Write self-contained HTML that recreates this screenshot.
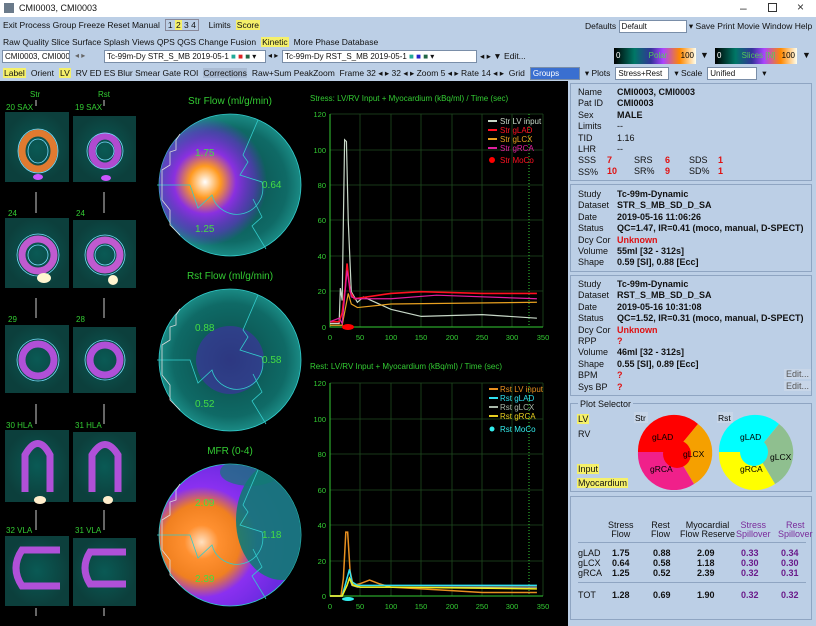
<!DOCTYPE html>
<html><head><meta charset="utf-8"><style>
*{margin:0;padding:0;box-sizing:border-box}
body{width:816px;height:626px;overflow:hidden;background:#bccfe6;font-family:"Liberation Sans",sans-serif;font-size:9px;color:#111;position:relative}
.a{position:absolute;white-space:nowrap}
.tb{position:absolute;left:0;top:0;width:816px;height:17px;background:#fff}
.row{position:absolute;left:0;height:14px;display:flex;align-items:center;gap:5px;padding-left:3px;font-size:8.5px;white-space:nowrap}
.hl{background:#f5f06a;padding:0 1px}
.sel{background:#fff;border:1px solid #7a8ea8;height:13px;padding:0 2px;font-size:8px;line-height:11px;overflow:hidden}
.box{position:absolute;left:570px;width:242px;border:1px solid #8fa5c2;background:#bccfe6}
.b{font-weight:bold}
.r{color:#e01010;font-weight:bold}
.p{color:#7a2a9a}
.pb{color:#6a1a8a;font-weight:bold}
</style></head><body>
<div class="tb"></div>
<div class="a" style="left:4px;top:3px;width:10px;height:10px;background:#6a7a8a"></div>
<div class="a" style="left:19px;top:3px;font-size:9px">CMI0003, CMI0003</div>
<div class="a" style="left:740px;top:1px;font-size:12px;color:#333">–</div>
<div class="a" style="left:768px;top:3px;width:9px;height:9px;border:1px solid #333"></div>
<div class="a" style="left:797px;top:0px;font-size:12px;color:#333">×</div>

<div class="row" style="top:18px">Exit Process Group Freeze Reset Manual <span style="border:1px solid #889;padding:0 2px">1 <span class="hl">2</span> 3 4</span>&nbsp; Limits <span class="hl">Score</span></div>
<div class="a" style="left:585px;top:20px;font-size:8.5px">Defaults <span class="sel" style="display:inline-block;width:68px;vertical-align:middle">Default</span> ▾ Save Print Movie Window Help</div>
<div class="row" style="top:35px">Raw Quality Slice Surface Splash Views QPS QGS Change Fusion <span class="hl">Kinetic</span> More Phase Database</div>

<div class="a sel" style="left:2px;top:50px;width:68px">CMI0003, CMI0003 ▾</div>
<div class="a" style="left:75px;top:51px;font-size:8px;color:#666">◂ ▸</div>
<div class="a sel" style="left:104px;top:50px;width:162px">Tc-99m-Dy STR_S_MB 2019-05-1 <span style="color:#2a9">■</span> <span style="color:#d22">■</span> <span style="color:#264">■</span> ▾</div>
<div class="a" style="left:268px;top:51px;font-size:8px">◂ ▸</div>
<div class="a sel" style="left:282px;top:50px;width:195px">Tc-99m-Dy RST_S_MB 2019-05-1 <span style="color:#2a9">■</span> <span style="color:#22c">■</span> <span style="color:#264">■</span> ▾</div>
<div class="a" style="left:480px;top:51px;font-size:8.5px">◂ ▸ ▼ Edit...</div>

<div class="a" style="left:614px;top:48px;width:82px;height:16px;background:linear-gradient(90deg,#000,#076 25%,#339 45%,#a4f 60%,#f80 80%,#ffe 100%);color:#fff;font-size:8px;padding:3px 2px">0 <span style="margin-left:26px;color:#5c5">Polar</span> <span style="float:right;color:#000">100</span></div>
<div class="a" style="left:700px;top:50px;font-size:9px">▼</div>
<div class="a" style="left:715px;top:48px;width:82px;height:16px;background:linear-gradient(90deg,#000,#076 25%,#339 45%,#a4f 60%,#f80 80%,#ffe 100%);color:#fff;font-size:8px;padding:3px 2px">0 <span style="margin-left:18px;color:#5c5">Slices [N]</span> <span style="float:right;color:#000">100</span></div>
<div class="a" style="left:802px;top:50px;font-size:9px">▼</div>
<div class="row" style="top:66px"><span class="hl">Label</span> Orient <span class="hl">LV</span> RV ED ES Blur Smear Gate ROI <span style="background:#aabbd2">Corrections</span> Raw+Sum PeakZoom &nbsp;Frame 32 ◂ ▸ 32 ◂ ▸ Zoom 5 ◂ ▸ Rate 14 ◂ ▸ &nbsp;Grid <span class="sel" style="background:#3a6fd0;color:#fff;width:50px">Groups</span>▾ Plots <span class="sel" style="width:54px">Stress+Rest</span>▾ Scale <span class="sel" style="width:50px">Unified</span>▾</div>

<svg class="a" style="left:0;top:81px" width="568" height="545" viewBox="0 81 568 545">
<defs>
<radialGradient id="sl"><stop offset="0" stop-color="#0a5a55"/><stop offset="1" stop-color="#0c3f3c"/></radialGradient>
<radialGradient id="hot" cx="0.5" cy="0.5" r="0.5"><stop offset="0" stop-color="#fff"/><stop offset=".25" stop-color="#ff9a20"/><stop offset=".5" stop-color="#8a30e0"/><stop offset=".8" stop-color="#6a30d0" stop-opacity=".6"/><stop offset="1" stop-color="#6a30d0" stop-opacity="0"/></radialGradient>
<radialGradient id="pbg"><stop offset="0" stop-color="#0a4a48"/><stop offset=".8" stop-color="#0f6a66"/><stop offset="1" stop-color="#1a8a84"/></radialGradient>
<radialGradient id="mfr" cx="0.3" cy="0.55" r="0.6"><stop offset="0" stop-color="#ffe0c0"/><stop offset=".2" stop-color="#ff9030"/><stop offset=".45" stop-color="#f08020"/><stop offset=".65" stop-color="#8a30f0"/><stop offset="1" stop-color="#6a2ae0"/></radialGradient>
</defs>
<rect x="0" y="81" width="568" height="545" fill="#000"/>
<g font-size="8" fill="#3c3" font-family="Liberation Sans">
<text x="30" y="97">Str</text><text x="98" y="97">Rst</text>
<text x="6" y="110">20 SAX</text><text x="75" y="110">19 SAX</text>
<text x="8" y="216">24</text><text x="76" y="216">24</text>
<text x="8" y="322">29</text><text x="76" y="322">28</text>
<text x="6" y="428">30 HLA</text><text x="75" y="428">31 HLA</text>
<text x="6" y="533">32 VLA</text><text x="75" y="533">31 VLA</text>
</g>
<g>
<rect x="5" y="112" width="64" height="70" fill="url(#sl)"/><rect x="73" y="116" width="63" height="66" fill="url(#sl)"/>
<rect x="5" y="218" width="64" height="70" fill="url(#sl)"/><rect x="73" y="220" width="63" height="68" fill="url(#sl)"/>
<rect x="5" y="325" width="64" height="68" fill="url(#sl)"/><rect x="73" y="327" width="63" height="66" fill="url(#sl)"/>
<rect x="5" y="430" width="64" height="72" fill="url(#sl)"/><rect x="73" y="432" width="63" height="70" fill="url(#sl)"/>
<rect x="5" y="536" width="64" height="70" fill="url(#sl)"/><rect x="73" y="538" width="63" height="68" fill="url(#sl)"/>
<g fill="none" stroke-width="7">
<ellipse cx="38" cy="151" rx="16" ry="18" stroke="#e07a30"/><ellipse cx="105" cy="151" rx="13" ry="15" stroke="#b04ad0"/>
<circle cx="38" cy="255" r="16" stroke="#c05ad0"/><circle cx="105" cy="255" r="15" stroke="#c05ad0"/>
<circle cx="38" cy="360" r="16" stroke="#b050d8"/><circle cx="105" cy="360" r="15" stroke="#b050d8"/>
<path d="M25 492 L25 455 Q38 432 50 455 L50 492" stroke="#b050d8"/><path d="M92 492 L92 455 Q105 434 118 455 L118 492" stroke="#b050d8"/>
<path d="M60 550 L22 550 Q10 568 22 586 L60 586" stroke="#b050d8"/><path d="M126 552 L90 552 Q80 568 90 584 L126 584" stroke="#b050d8"/>
</g>
<g fill="none" stroke="#7df" stroke-width=".8">
<ellipse cx="38" cy="151" rx="20" ry="22"/><ellipse cx="38" cy="151" rx="10" ry="12"/>
<circle cx="105" cy="151" r="18"/><circle cx="105" cy="151" r="9"/>
<circle cx="38" cy="255" r="21"/><circle cx="38" cy="255" r="10"/><circle cx="105" cy="255" r="20"/><circle cx="105" cy="255" r="10"/>
<circle cx="38" cy="360" r="21"/><circle cx="105" cy="360" r="20"/>
</g>
<ellipse cx="44" cy="278" rx="7" ry="5" fill="#fff5d0"/><ellipse cx="113" cy="280" rx="5" ry="5" fill="#fff5d0"/>
<ellipse cx="38" cy="177" rx="5" ry="3" fill="#c5f"/><ellipse cx="106" cy="178" rx="5" ry="3" fill="#c5f"/>
<ellipse cx="40" cy="500" rx="6" ry="4" fill="#fec"/><ellipse cx="108" cy="500" rx="5" ry="4" fill="#fec"/>
</g>
<g stroke="#ccc" stroke-width="1"><path d="M36 100V106M104 100V106M36 192V213M104 192V213M36 298V318M104 298V318M36 404V424M104 404V424M36 510V530M104 510V530M36 608V616M104 608V616"/></g>

<g font-size="10" fill="#3c3" font-family="Liberation Sans" text-anchor="middle">
<text x="230" y="104">Str Flow (ml/g/min)</text>
<text x="230" y="279">Rst Flow (ml/g/min)</text>
<text x="230" y="454">MFR (0-4)</text>
</g>
<clipPath id="c1"><circle cx="230" cy="185" r="71"/></clipPath>
<clipPath id="c3"><circle cx="230" cy="535" r="71"/></clipPath>
<circle cx="230" cy="185" r="71" fill="url(#pbg)" stroke="#3cc" stroke-width=".8"/>
<g clip-path="url(#c1)"><ellipse cx="205" cy="182" rx="62" ry="64" fill="url(#hot)"/></g>
<circle cx="230" cy="360" r="71" fill="url(#pbg)" stroke="#3cc" stroke-width=".8"/>
<circle cx="230" cy="360" r="34" fill="#4a2ab0" opacity=".55"/>
<circle cx="230" cy="535" r="71" fill="url(#mfr)" stroke="#3cc" stroke-width=".8"/>
<g clip-path="url(#c3)"><ellipse cx="282" cy="520" rx="46" ry="60" fill="#127a74" opacity=".9"/><ellipse cx="250" cy="472" rx="30" ry="14" fill="#127a74" opacity=".7"/></g>
<g fill="none" stroke="#3cc" stroke-width=".8">
<path d="M258 120L243 155L248 162L240 175L262 182A22 22 0 0 1 212 195L198 208L190 185H157M253 199L262 217L252 226L266 249"/>
<path d="M258 295L243 330L248 337L240 350L262 357A22 22 0 0 1 212 370L198 383L190 360H157M253 374L262 392L252 401L266 424"/>
<path d="M258 470L243 505L248 512L240 525L262 532A22 22 0 0 1 212 545L198 558L190 535H157M253 549L262 567L252 576L266 599"/>
</g>
<g fill="none" stroke="#ddd" stroke-width=".8">
<path d="M180 134L176 140V150L170 152V165L162 170V200L170 210V225L180 235"/>
<path d="M180 309L176 315V325L170 327V340L162 345V375L170 385V400L180 410"/>
<path d="M180 484L176 490V500L170 502V515L162 520V550L170 560V575L180 585"/>
</g>
<g font-size="10" fill="#4d4" font-family="Liberation Sans">
<text x="195" y="156">1.75</text><text x="262" y="188">0.64</text><text x="195" y="232">1.25</text>
<text x="195" y="331">0.88</text><text x="262" y="363">0.58</text><text x="195" y="407">0.52</text>
<text x="195" y="506">2.09</text><text x="262" y="538">1.18</text><text x="195" y="582">2.39</text>
</g>

<g font-size="8" fill="#3c3" font-family="Liberation Sans">
<text x="310" y="101">Stress: LV/RV Input + Myocardium (kBq/ml) / Time (sec)</text>
<text x="310" y="369">Rest: LV/RV Input + Myocardium (kBq/ml) / Time (sec)</text>
</g>
<g stroke="#1f4a1f" stroke-width=".8">
<path d="M360 114V327M391 114V327M421 114V327M452 114V327M482 114V327M512 114V327M543 114V327M330 150H543M330 185H543M330 220H543M330 256H543M330 291H543M330 114H543"/>
<path d="M360 383V596M391 383V596M421 383V596M452 383V596M482 383V596M512 383V596M543 383V596M330 419H543M330 454H543M330 490H543M330 525H543M330 561H543M330 383H543"/>
</g>
<g stroke="#3c3" stroke-width="1" fill="none"><path d="M330 114V327H543"/><path d="M330 383V596H543"/>
<path d="M529 114V327M529 383V596" stroke-dasharray="1 2"/></g>
<g font-size="7.5" fill="#3c3" font-family="Liberation Sans" text-anchor="end">
<text x="326" y="117">120</text><text x="326" y="153">100</text><text x="326" y="188">80</text><text x="326" y="223">60</text><text x="326" y="259">40</text><text x="326" y="294">20</text><text x="326" y="330">0</text>
<text x="326" y="386">120</text><text x="326" y="422">100</text><text x="326" y="457">80</text><text x="326" y="493">60</text><text x="326" y="528">40</text><text x="326" y="564">20</text><text x="326" y="599">0</text>
</g>
<g font-size="7.5" fill="#3c3" font-family="Liberation Sans" text-anchor="middle">
<text x="330" y="340">0</text><text x="360" y="340">50</text><text x="391" y="340">100</text><text x="421" y="340">150</text><text x="452" y="340">200</text><text x="482" y="340">250</text><text x="512" y="340">300</text><text x="543" y="340">350</text>
<text x="330" y="609">0</text><text x="360" y="609">50</text><text x="391" y="609">100</text><text x="421" y="609">150</text><text x="452" y="609">200</text><text x="482" y="609">250</text><text x="512" y="609">300</text><text x="543" y="609">350</text>
</g>
<g transform="translate(330,327) scale(0.6086,-1.7667)" fill="none" stroke-width="1.2">
<polyline vector-effect="non-scaling-stroke" stroke="#c8d8c8" points="0,2 15,2 17,22 20,15 24,106 27,105 30,60 35,20 45,14 55,17 100,10 150,6 250,7 340,5"/>
<polyline vector-effect="non-scaling-stroke" stroke="#ff1020" stroke-width="1.6" points="0,3 15,3 20,8 25,22 28,36 33,20 40,16 100,19 150,20 250,19 340,19"/>
<polyline vector-effect="non-scaling-stroke" stroke="#e8a020" points="0,1 20,1 30,19 35,13 45,11 100,13 340,14"/>
<polyline vector-effect="non-scaling-stroke" stroke="#e020a0" points="0,3 15,5 20,2 28,32 35,17 45,16 100,16 175,18 340,16"/>
</g>
<g transform="translate(330,596) scale(0.6086,-1.775)" fill="none" stroke-width="1.2">
<polyline vector-effect="non-scaling-stroke" stroke="#e89020" stroke-width="1.5" points="0,0 18,0 22,10 26,36 29,36 33,14 38,6 50,7 65,9 80,7 100,5 150,4 200,3 250,2 300,2 340,2"/>
<polyline vector-effect="non-scaling-stroke" stroke="#30e0f0" stroke-width="1.5" points="0,0 20,0 28,10 32,15 36,8 45,6 100,6 340,6"/>
<polyline vector-effect="non-scaling-stroke" stroke="#aab8aa" points="0,0 20,0 28,6 32,10 36,6 45,5 100,5 340,5"/>
<polyline vector-effect="non-scaling-stroke" stroke="#f0f020" stroke-width="1.5" points="0,0 20,0 28,6 32,10 38,6 50,5 100,5 340,4"/>
</g>
<ellipse cx="348" cy="327" rx="6" ry="3" fill="#f00"/><ellipse cx="348" cy="599" rx="6" ry="2" fill="#3ee"/>
<g font-size="8" font-family="Liberation Sans">
<path d="M488 121H497" stroke="#c8d8c8" stroke-width="2"/><text x="500" y="124" fill="#c8d8c8">Str LV input</text>
<path d="M488 130H497" stroke="#f12" stroke-width="2"/><text x="500" y="133" fill="#f12">Str gLAD</text>
<path d="M488 139H497" stroke="#e8a020" stroke-width="2"/><text x="500" y="142" fill="#e8a020">Str gLCX</text>
<path d="M488 148H497" stroke="#e020a0" stroke-width="2"/><text x="500" y="151" fill="#e020a0">Str gRCA</text>
<circle cx="492" cy="160" r="3" fill="#f00"/><text x="500" y="163" fill="#f12">Str MoCo</text>
<path d="M489 389H498" stroke="#e89020" stroke-width="2"/><text x="500" y="392" fill="#e89020">Rst LV input</text>
<path d="M489 398H498" stroke="#30e0f0" stroke-width="2"/><text x="500" y="401" fill="#30e0f0">Rst gLAD</text>
<path d="M489 407H498" stroke="#aab8aa" stroke-width="2"/><text x="500" y="410" fill="#aab8aa">Rst gLCX</text>
<path d="M489 416H498" stroke="#e8d020" stroke-width="2"/><text x="500" y="419" fill="#e8d020">Rst gRCA</text>
<circle cx="492" cy="429" r="2.5" fill="#3ee"/><text x="500" y="432" fill="#3ee">Rst MoCo</text>
</g>
</svg>

<div class="box" style="top:83px;height:98px"></div>
<div class="a" style="left:578px;top:87px;line-height:11.4px">Name<br>Pat ID<br>Sex<br>Limits<br>TID<br>LHR<br>SSS<br>SS%</div>
<div class="a b" style="left:617px;top:87px;line-height:11.4px">CMI0003, CMI0003<br>CMI0003<br>MALE<br><span style="font-weight:normal">--</span><br><span style="font-weight:normal">1.16</span><br><span style="font-weight:normal">--</span></div>
<div class="a r" style="left:607px;top:155px;line-height:11.4px">7<br>10</div>
<div class="a" style="left:634px;top:155px;line-height:11.4px">SRS<br>SR%</div>
<div class="a r" style="left:665px;top:155px;line-height:11.4px">6<br>9</div>
<div class="a" style="left:689px;top:155px;line-height:11.4px">SDS<br>SD%</div>
<div class="a r" style="left:718px;top:155px;line-height:11.4px">1<br>1</div>

<div class="box" style="top:184px;height:88px"></div>
<div class="a" style="left:578px;top:189px;line-height:11.4px">Study<br>Dataset<br>Date<br>Status<br>Dcy Cor<br>Volume<br>Shape</div>
<div class="a b" style="left:617px;top:189px;line-height:11.4px">Tc-99m-Dynamic<br>STR_S_MB_SD_D_SA<br>2019-05-16 11:06:26<br>QC=1.47, IR=0.41 (moco, manual, D-SPECT)<br><span class="r">Unknown</span><br>55ml [32 - 312s]<br>0.59 [SI], 0.88 [Ecc]</div>

<div class="box" style="top:275px;height:121px"></div>
<div class="a" style="left:578px;top:279px;line-height:11.4px">Study<br>Dataset<br>Date<br>Status<br>Dcy Cor<br>RPP<br>Volume<br>Shape<br>BPM<br>Sys BP</div>
<div class="a b" style="left:617px;top:279px;line-height:11.4px">Tc-99m-Dynamic<br>RST_S_MB_SD_D_SA<br>2019-05-16 10:31:08<br>QC=1.52, IR=0.31 (moco, manual, D-SPECT)<br><span class="r">Unknown</span><br><span class="r">?</span><br>46ml [32 - 312s]<br>0.55 [SI], 0.89 [Ecc]<br><span class="r">?</span><br><span class="r">?</span></div>
<div class="a" style="left:784px;top:369px;background:#c8d6e8;padding:0 2px;color:#555">Edit...</div>
<div class="a" style="left:784px;top:381px;background:#c8d6e8;padding:0 2px;color:#555">Edit...</div>

<div class="box" style="top:403px;height:89px"></div>
<div class="a" style="left:578px;top:399px;background:#bccfe6;padding:0 2px">Plot Selector</div>
<div class="a hl" style="left:577px;top:414px">LV</div>
<div class="a" style="left:578px;top:429px">RV</div>
<div class="a hl" style="left:577px;top:464px">Input</div>
<div class="a hl" style="left:577px;top:478px">Myocardium</div>
<svg class="a" style="left:630px;top:410px" width="180" height="80" font-family="Liberation Sans" font-size="8.5">
<rect x="4" y="2" width="14" height="11" fill="#c8d6e8"/><text x="5" y="11">Str</text>
<rect x="87" y="2" width="16" height="11" fill="#c8d6e8"/><text x="88" y="11">Rst</text>
<circle cx="45" cy="42" r="36" fill="#c8d6e8"/>
<path d="M45 42 L8 42 A36 36 0 0 1 68 14Z" fill="#f00"/>
<path d="M45 42 L68 14 A36 36 0 0 1 64 74Z" fill="#f5a000"/>
<path d="M45 42 L64 74 A36 36 0 0 1 8 42Z" fill="#f0208a"/>
<circle cx="47" cy="44" r="14" fill="#f00"/>
<text x="22" y="30">gLAD</text><text x="53" y="47">gLCX</text><text x="20" y="62">gRCA</text>
<circle cx="126" cy="42" r="36" fill="#c8d6e8"/>
<path d="M126 42 L89 42 A36 36 0 0 1 149 14Z" fill="#0ff"/>
<path d="M126 42 L149 14 A36 36 0 0 1 145 74Z" fill="#8fbf8f"/>
<path d="M126 42 L145 74 A36 36 0 0 1 89 42Z" fill="#ff0"/>
<circle cx="124" cy="42" r="14" fill="#0ff"/>
<text x="110" y="30">gLAD</text><text x="140" y="50">gLCX</text><text x="110" y="62">gRCA</text>
</svg>

<div class="box" style="top:496px;height:124px"></div>
<div class="a" style="left:608px;top:521px;text-align:center;line-height:9px">Stress<br>Flow</div>
<div class="a" style="left:651px;top:521px;text-align:center;line-height:9px">Rest<br>Flow</div>
<div class="a" style="left:680px;top:521px;text-align:center;line-height:9px">Myocardial<br>Flow Reserve</div>
<div class="a p" style="left:736px;top:521px;text-align:center;line-height:9px">Stress<br>Spillover</div>
<div class="a p" style="left:778px;top:521px;text-align:center;line-height:9px">Rest<br>Spillover</div>
<div class="a" style="left:578px;top:542px;width:228px;border-top:1px solid #8fa5c2"></div>
<div class="a" style="left:578px;top:582px;width:228px;border-top:1px solid #8fa5c2"></div>
<div class="a" style="left:578px;top:548px;line-height:10px">gLAD<br>gLCX<br>gRCA</div>
<div class="a b" style="left:612px;top:548px;line-height:10px">1.75<br>0.64<br>1.25</div>
<div class="a b" style="left:653px;top:548px;line-height:10px">0.88<br>0.58<br>0.52</div>
<div class="a b" style="left:697px;top:548px;line-height:10px">2.09<br>1.18<br>2.39</div>
<div class="a pb" style="left:741px;top:548px;line-height:10px">0.33<br>0.30<br>0.32</div>
<div class="a pb" style="left:781px;top:548px;line-height:10px">0.34<br>0.30<br>0.31</div>
<div class="a" style="left:578px;top:590px">TOT</div>
<div class="a b" style="left:612px;top:590px">1.28</div>
<div class="a b" style="left:653px;top:590px">0.69</div>
<div class="a b" style="left:697px;top:590px">1.90</div>
<div class="a pb" style="left:741px;top:590px">0.32</div>
<div class="a pb" style="left:781px;top:590px">0.32</div>
</body></html>
